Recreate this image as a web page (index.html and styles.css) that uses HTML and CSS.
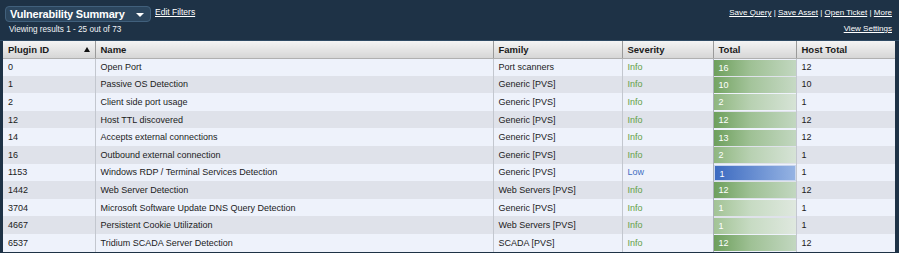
FILE: index.html
```html
<!DOCTYPE html>
<html>
<head>
<meta charset="utf-8">
<link rel="stylesheet" href="styles.css">
</head>
<body>
<div class="top">
  <div class="left">
    <div class="titlerow">
      <div class="select">Vulnerability Summary <span class="caret"></span></div>
      <a class="link">Edit Filters</a>
    </div>
    <div class="viewing">Viewing results 1 - 25 out of 73</div>
  </div>
  <div class="right">
    <div class="actions"><a class="link">Save Query</a> | <a class="link">Save Asset</a> | <a class="link">Open Ticket</a> | <a class="link">More</a></div>
    <div class="actions second"><a class="link">View Settings</a></div>
  </div>
</div>
<div class="tablewrap">
<table class="grid">
  <colgroup>
    <col class="c1"><col class="c2"><col class="c3"><col class="c4"><col class="c5"><col class="c6">
  </colgroup>
  <thead>
    <tr><th><div class="sorthead">Plugin ID <span class="sort"></span></div></th><th>Name</th><th>Family</th><th>Severity</th><th>Total</th><th>Host Total</th></tr>
  </thead>
  <tbody>
    <tr><td>0</td><td>Open Port</td><td>Port scanners</td><td class="info">Info</td><td class="tot"><div class="bar g16">16</div></td><td>12</td></tr>
    <tr><td>1</td><td>Passive OS Detection</td><td>Generic [PVS]</td><td class="info">Info</td><td class="tot"><div class="bar g10">10</div></td><td>10</td></tr>
    <tr><td>2</td><td>Client side port usage</td><td>Generic [PVS]</td><td class="info">Info</td><td class="tot"><div class="bar g2">2</div></td><td>1</td></tr>
    <tr><td>12</td><td>Host TTL discovered</td><td>Generic [PVS]</td><td class="info">Info</td><td class="tot"><div class="bar g12">12</div></td><td>12</td></tr>
    <tr><td>14</td><td>Accepts external connections</td><td>Generic [PVS]</td><td class="info">Info</td><td class="tot"><div class="bar g12">13</div></td><td>12</td></tr>
    <tr><td>16</td><td>Outbound external connection</td><td>Generic [PVS]</td><td class="info">Info</td><td class="tot"><div class="bar g2">2</div></td><td>1</td></tr>
    <tr><td>1153</td><td>Windows RDP / Terminal Services Detection</td><td>Generic [PVS]</td><td class="low">Low</td><td class="tot"><div class="bar b1">1</div></td><td>1</td></tr>
    <tr><td>1442</td><td>Web Server Detection</td><td>Web Servers [PVS]</td><td class="info">Info</td><td class="tot"><div class="bar g12">12</div></td><td>12</td></tr>
    <tr><td>3704</td><td>Microsoft Software Update DNS Query Detection</td><td>Generic [PVS]</td><td class="info">Info</td><td class="tot"><div class="bar g1">1</div></td><td>1</td></tr>
    <tr><td>4667</td><td>Persistent Cookie Utilization</td><td>Web Servers [PVS]</td><td class="info">Info</td><td class="tot"><div class="bar g1">1</div></td><td>1</td></tr>
    <tr><td>6537</td><td>Tridium SCADA Server Detection</td><td>SCADA [PVS]</td><td class="info">Info</td><td class="tot"><div class="bar g12">12</div></td><td>12</td></tr>
  </tbody>
</table>
</div>
</body>
</html>
```
FILE: styles.css
```css
html, body {
  margin: 0;
  padding: 0;
  background: #1e3246;
  font-family: "Liberation Sans", Arial, sans-serif;
  overflow: hidden;
}
.top {
  height: 41px;
  display: flex;
  justify-content: space-between;
  color: #fff;
  box-sizing: border-box;
  border-bottom: 1px solid #2f4a63;
}
.left { padding: 6px 0 0 5px; }
.titlerow { display: flex; align-items: flex-start; gap: 4px; }
.select {
  width: 146px;
  height: 16px;
  box-sizing: border-box;
  background: #2c465e;
  border: 1px solid #41607c;
  border-radius: 4px;
  font-size: 11px;
  font-weight: bold;
  letter-spacing: -0.2px;
  line-height: 14px;
  padding-left: 4px;
  position: relative;
  color: #fff;
}
.caret {
  position: absolute;
  right: 6px;
  top: 6px;
  width: 0; height: 0;
  border-left: 4px solid transparent;
  border-right: 4px solid transparent;
  border-top: 4px solid #fff;
}
.link {
  color: #fff;
  text-decoration: underline;
  font-size: 8.5px;
}
.titlerow .link { margin-top: 1px; margin-left: 0; }
.viewing { font-size: 8.2px; margin: 3px 0 0 4px; color: #f2f4f6; }
.right { padding: 8px 7px 0 0; text-align: right; }
.actions { font-size: 8px; color: #fff; line-height: 10px; }
.actions .link { font-size: 8px; }
.actions.second { margin-top: 6px; }
.tablewrap { padding: 0 4px 0 3px; }
.grid {
  width: 892px;
  border-collapse: collapse;
  table-layout: fixed;
  font-size: 9px;
  color: #1b1b1b;
}
.c1 { width: 92px; }
.c2 { width: 398px; }
.c3 { width: 129px; }
.c4 { width: 91px; }
.c5 { width: 83px; }
.c6 { width: 99px; }
.grid th {
  height: 17px;
  box-sizing: border-box;
  text-align: left;
  font-size: 9.5px;
  font-weight: bold;
  padding: 0 5px;
  background: linear-gradient(#f4f4f4, #d6d6d6);
  border-left: 1px solid #9a9a9a;
  border-bottom: 1px solid #b0b0b0;
  color: #1a1a1a;
}
.grid th:first-child { border-left: none; }
.sorthead { display: flex; justify-content: space-between; align-items: center; }
.sort {
  width: 0; height: 0;
  border-left: 3px solid transparent;
  border-right: 3px solid transparent;
  border-bottom: 5px solid #111;
}
.grid td {
  height: 17.6px;
  padding: 0 5px;
  box-sizing: border-box;
  border-left: 1px solid #c3c7cf;
  white-space: nowrap;
  overflow: hidden;
}
.grid td:first-child { border-left: none; }
.grid tbody tr:nth-child(odd) td { background: #eef2fb; }
.grid tbody tr:nth-child(even) td { background: #dfe2ea; }
.info { color: #64a047; }
.low { color: #3e6ec2; }
.grid td.tot { padding: 0; border-left: 1px solid #aab0b8; }
.bar {
  height: 16px;
  margin: 1px 0 0 0;
  line-height: 16px;
  padding-left: 5px;
  color: #fff;
}
.g16, .g12 { background: linear-gradient(90deg, #6d9f5c, #9fc195 45%, #c2d7c0); }
.g10 { background: linear-gradient(90deg, #74a463, #a4c49b 45%, #c6d9c4); }
.g2 { background: linear-gradient(90deg, #8fb67f, #b8d1b2 45%, #d6e3d6); }
.g1 { background: linear-gradient(90deg, #a2c395, #c7dbc3 45%, #dfe8df); }
.b1 { background: linear-gradient(90deg, #3c6ac0, #95b3e3); border: 1px solid #c9d6ee; box-sizing: border-box; }
```
